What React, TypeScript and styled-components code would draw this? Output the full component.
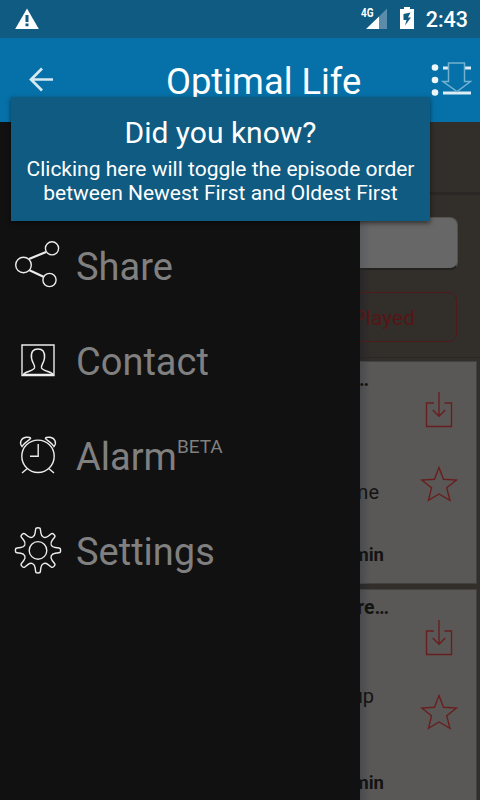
import React from "react";
import styled, { createGlobalStyle } from "styled-components";

const GlobalStyle = createGlobalStyle`
  * { box-sizing: border-box; }
  body { margin: 0; background: #111; font-family: Roboto, "Liberation Sans", sans-serif; }
`;

const Screen = styled.div`
  position: relative;
  display: flex;
  flex-direction: column;
  width: 480px;
  height: 800px;
  overflow: hidden;
`;

const StatusBar = styled.div`
  display: flex;
  align-items: center;
  height: 38px;
  flex: none;
  padding: 0 12px 0 15px;
  background: #0f5b81;
`;

const StatusRight = styled.div`
  display: flex;
  align-items: center;
  gap: 12px;
  margin-left: auto;
`;

const Clock = styled.span`
  font-size: 21.5px;
  font-weight: 500;
  line-height: 38px;
  padding-top: 2px;
  color: #fff;
`;

const AppBar = styled.header`
  display: flex;
  align-items: flex-start;
  height: 84px;
  flex: none;
  padding: 24px 8px 0 28px;
  background: #0671a8;
`;

const Title = styled.h1`
  flex: none;
  width: 196px;
  margin: -2px 0 0 111px;
  font-size: 36.3px;
  font-weight: 400;
  line-height: 44px;
  white-space: nowrap;
  color: #fff;
`;

const OrderSlot = styled.div`
  margin-left: auto;
  display: flex;
`;

const Body = styled.div`
  display: flex;
  flex: 1;
  min-height: 0;
`;

const Drawer = styled.nav`
  width: 360px;
  flex: none;
  padding-top: 97px;
  background: #111;
`;

const DrawerItem = styled.div`
  display: flex;
  align-items: center;
  height: 95px;
  padding-left: 14px;
`;

const ItemLabel = styled.span`
  margin-left: 14px;
  font-size: 38px;
  line-height: 46px;
  white-space: nowrap;
  color: #808080;
`;

const Beta = styled.span`
  align-self: flex-start;
  margin-top: 27px;
  font-size: 19px;
  line-height: 22px;
  color: #808080;
`;

const Page = styled.main`
  display: flex;
  flex-direction: column;
  flex: 1;
  min-width: 0;
  overflow: hidden;
  background:
    linear-gradient(90deg, rgba(32, 34, 40, 0.55), rgba(40, 42, 48, 0) 11px),
    #322e2a;
`;

const Heading = styled.div`
  height: 73px;
  flex: none;
  border-bottom: 3px solid #2a2724;
`;

const SearchField = styled.div`
  height: 53px;
  flex: none;
  margin: 22px 22px 0 -20px;
  border-radius: 8px;
  border: 1px solid #53524f;
  border-bottom: 2px solid #242220;
  background: linear-gradient(90deg, #5c5d60 20px, #676767 30px);
`;

const PlayedButton = styled.div`
  display: flex;
  justify-content: flex-end;
  height: 50px;
  flex: none;
  margin: 22px 23px 0 -20px;
  padding-right: 41px;
  border: 1px solid #4e1b1a;
  border-radius: 8px;
  font-size: 21px;
  line-height: 50px;
  color: #561615;
`;

const Episodes = styled.div`
  flex: none;
  margin-top: 15px;
  padding-top: 3px;
  border-top: 1px solid #292623;
`;

const Card = styled.article`
  display: flex;
  height: 223px;
  margin: 0 3px 5px 0;
  border: 1px solid #42413f;
  border-left: 0;
  background: linear-gradient(90deg, #484a4e, #5a5856 10px);
`;

const CardText = styled.div`
  display: flex;
  flex-direction: column;
  width: 60px;
`;

const CardLine = styled.div<{ $end: number; $top: number; $size: number; $bold?: boolean }>`
  display: flex;
  justify-content: flex-end;
  width: ${(p) => p.$end}px;
  height: 24px;
  flex: none;
  margin-top: ${(p) => p.$top}px;
  font-size: ${(p) => p.$size}px;
  font-weight: ${(p) => (p.$bold ? 700 : 400)};
  line-height: 24px;
  white-space: nowrap;
  color: #131313;
`;

const CardActions = styled.div`
  display: flex;
  flex-direction: column;
  gap: 37px;
  padding-top: 29px;
`;

const Hint = styled.aside`
  position: absolute;
  left: 11px;
  top: 97px;
  width: 419px;
  height: 124px;
  padding-top: 18px;
  text-align: center;
  color: #fff;
  background: #0f5b81;
  box-shadow: 0 2px 5px rgba(0, 0, 0, 0.55);
`;

const HintTitle = styled.div`
  font-size: 30px;
  line-height: 36px;
`;

const HintText = styled.div`
  margin-top: 6px;
  font-size: 21px;
  line-height: 24px;
  white-space: nowrap;
`;

const WarningIcon = () => (
  <svg width="24" height="38" viewBox="0 0 24 38">
    <path d="M12 8.5 23.8 29H.2Z" fill="#fff" />
    <path d="M10.5 15h3v7h-3zM10.5 23.5h3v2.8h-3z" fill="#0f5b81" />
  </svg>
);

const SignalIcon = () => (
  <svg width="27" height="38" viewBox="0 0 27 38">
    <text x="0" y="17.3" fontSize="12" fontWeight="700" textLength="12.5" lengthAdjust="spacingAndGlyphs" fill="#fff">4G</text>
    <path d="M18 16.5 26 8.500V29H18Z" fill="#5b8dab" />
    <path d="M5 29 18 16.500V29Z" fill="#fff" />
  </svg>
);

const BatteryIcon = () => (
  <svg width="14" height="38" viewBox="0 0 14 38">
    <path d="M0 9h4V7h6v2h4v20H0Z" fill="#fff" />
    <path d="M10.500 12.500 3.500 14V20H6.500L5 25.500 11 17.500H8Z" fill="#0f5b81" />
  </svg>
);

const BackIcon = () => (
  <svg width="27" height="34" viewBox="0 0 27 34" fill="none" stroke="#d6e8f2" strokeWidth="2.700">
    <path d="M14 6.500 3 17.500 14 28.500M3 17.500H25" />
  </svg>
);

const OrderIcon = () => (
  <svg width="42" height="36" viewBox="0 0 42 36">
    <g fill="#eef6fa">
      <circle cx="5" cy="5.500" r="3.300" />
      <circle cx="5" cy="18" r="3.300" />
      <circle cx="5" cy="30.500" r="3.300" />
    </g>
    <path d="M13 6h5M34 6h7M13 31h28" stroke="#deedf5" strokeWidth="2.800" />
    <path d="M18.500 1h16v18.500h6L27 29.500 13 19.500h5.500Z" fill="none" stroke="#74b1d0" strokeWidth="1.500" />
  </svg>
);

const Glyph = styled.svg`
  width: 48px;
  height: 48px;
  flex: none;
  overflow: visible;
  fill: none;
  stroke: #ececec;
  stroke-width: 1.4;
`;

const ShareIcon = () => (
  <Glyph viewBox="0 0 48 48">
    <circle cx="9.500" cy="22" r="7.800" />
    <circle cx="38" cy="5.300" r="6.600" />
    <circle cx="35.500" cy="37" r="6.600" />
    <path d="M15 16 32 9M15.500 27.300 29.500 33.800" strokeWidth="2.200" />
  </Glyph>
);

const ContactIcon = () => (
  <Glyph viewBox="0 0 48 48">
    <path d="M8 7h32v30.500H8Z" />
    <path d="M9.500 36.500c1-3 9-3 11-6.500 1.200-2.500-2.500-5-3-10-.8-6.500 2-9 6.500-9s7 2.500 6.500 9c-.5 5-4 7.500-3 10 2 3.500 10.500 3.500 11.500 6.500Z" strokeWidth="1.500" />
  </Glyph>
);

const AlarmIcon = () => (
  <Glyph viewBox="0 0 48 48" strokeWidth="1.600">
    <circle cx="24" cy="23.300" r="16.200" />
    <path d="M24.200 11V23.200H16M13 35.700 8 40M35 35.700 40 40" />
    <path d="M8 13.500C5 10 7 5 12 4.300c3-.3 5 .3 4.500 1.300C15 7.500 10 9.500 8 13.500ZM40 13.500c3-3.500 1-8.500-4-9.200-3-.3-5 .3-4.500 1.300C33 7.500 38 9.500 40 13.500Z" />
  </Glyph>
);

const SettingsIcon = () => {
  // One tooth on the vertical axis, repeated every 45 degrees.
  const tooth = [
    [-5.5, -13.2], [-3.3, -14.1], [-2.9, -17.2], [-2.4, -21], [-2.3, -22.6],
    [0, -22.6], [2.3, -22.6], [2.4, -21], [2.9, -17.2], [3.3, -14.1], [5.5, -13.2],
  ];
  const outline = Array.from({ length: 8 }, (_, k) => {
    const a = (k * Math.PI) / 4;
    const p = tooth.map(([x, y]) =>
      `${(24 + x * Math.cos(a) - y * Math.sin(a)).toFixed(2)} ${(22.4 + x * Math.sin(a) + y * Math.cos(a)).toFixed(2)}`
    );
    return `${k ? "L" : "M"}${p[0]}Q${p[1]} ${p[2]}L${p[3]}Q${p[4]} ${p[5]}Q${p[6]} ${p[7]}L${p[8]}Q${p[9]} ${p[10]}`;
  }).join("");
  return (
    <Glyph viewBox="0 0 48 48">
      <circle cx="24" cy="22.400" r="8.800" />
      <path d={`${outline}Z`} />
    </Glyph>
  );
};

const ActionGlyph = styled.svg`
  width: 38px;
  height: 38px;
  fill: none;
  stroke: #681e1e;
  stroke-width: 1.4;
`;

const DownloadIcon = () => (
  <ActionGlyph viewBox="0 0 38 38">
    <path d="M14 12H6.500V35.500H31.500V12H24.500M19 1V25.500M12.800 19 19 25.300 25.200 19" />
  </ActionGlyph>
);

const StarIcon = () => (
  <ActionGlyph viewBox="0 0 38 38">
    <path d="M19 1.500 23.500 13.300 36.500 14 26.700 21.800 30 34.300 19 28 8.500 34.300 11.500 21.800 1.700 14 14.500 13.300Z" />
  </ActionGlyph>
);

type Episode = {
  title: string;
  titleEnd: number;
  text: string;
  textEnd: number;
  textTop: number;
  length: string;
};

const episodes: Episode[] = [
  { title: "…", titleEnd: 9, text: "me", textEnd: 19, textTop: 88, length: "min" },
  { title: "re…", titleEnd: 29, text: "up", textEnd: 14, textTop: 64, length: "min" },
];

const menu = [
  { label: "Share", Icon: ShareIcon },
  { label: "Contact", Icon: ContactIcon },
  { label: "Alarm", Icon: AlarmIcon, beta: true },
  { label: "Settings", Icon: SettingsIcon },
];

export default function App() {
  return (
    <Screen>
      <GlobalStyle />
      <StatusBar>
        <WarningIcon />
        <StatusRight>
          <SignalIcon />
          <BatteryIcon />
          <Clock>2:43</Clock>
        </StatusRight>
      </StatusBar>
      <AppBar>
        <BackIcon />
        <Title>Optimal Life</Title>
        <OrderSlot>
          <OrderIcon />
        </OrderSlot>
      </AppBar>
      <Body>
        <Drawer>
          {menu.map(({ label, Icon, beta }) => (
            <DrawerItem key={label}>
              <Icon />
              <ItemLabel>{label}</ItemLabel>
              {beta && <Beta>BETA</Beta>}
            </DrawerItem>
          ))}
        </Drawer>
        <Page>
          <Heading />
          <SearchField />
          <PlayedButton>Played</PlayedButton>
          <Episodes>
            {episodes.map((e) => (
              <Card key={e.title}>
                <CardText>
                  <CardLine $bold $size={19.5} $end={e.titleEnd} $top={6}>{e.title}</CardLine>
                  <CardLine $size={20} $end={e.textEnd} $top={e.textTop}>{e.text}</CardLine>
                  <CardLine $bold $size={18.5} $end={24} $top={127 - e.textTop}>{e.length}</CardLine>
                </CardText>
                <CardActions>
                  <DownloadIcon />
                  <StarIcon />
                </CardActions>
              </Card>
            ))}
          </Episodes>
        </Page>
      </Body>
      <Hint>
        <HintTitle>Did you know?</HintTitle>
        <HintText>
          Clicking here will toggle the episode order
          <br />
          between Newest First and Oldest First
        </HintText>
      </Hint>
    </Screen>
  );
}
